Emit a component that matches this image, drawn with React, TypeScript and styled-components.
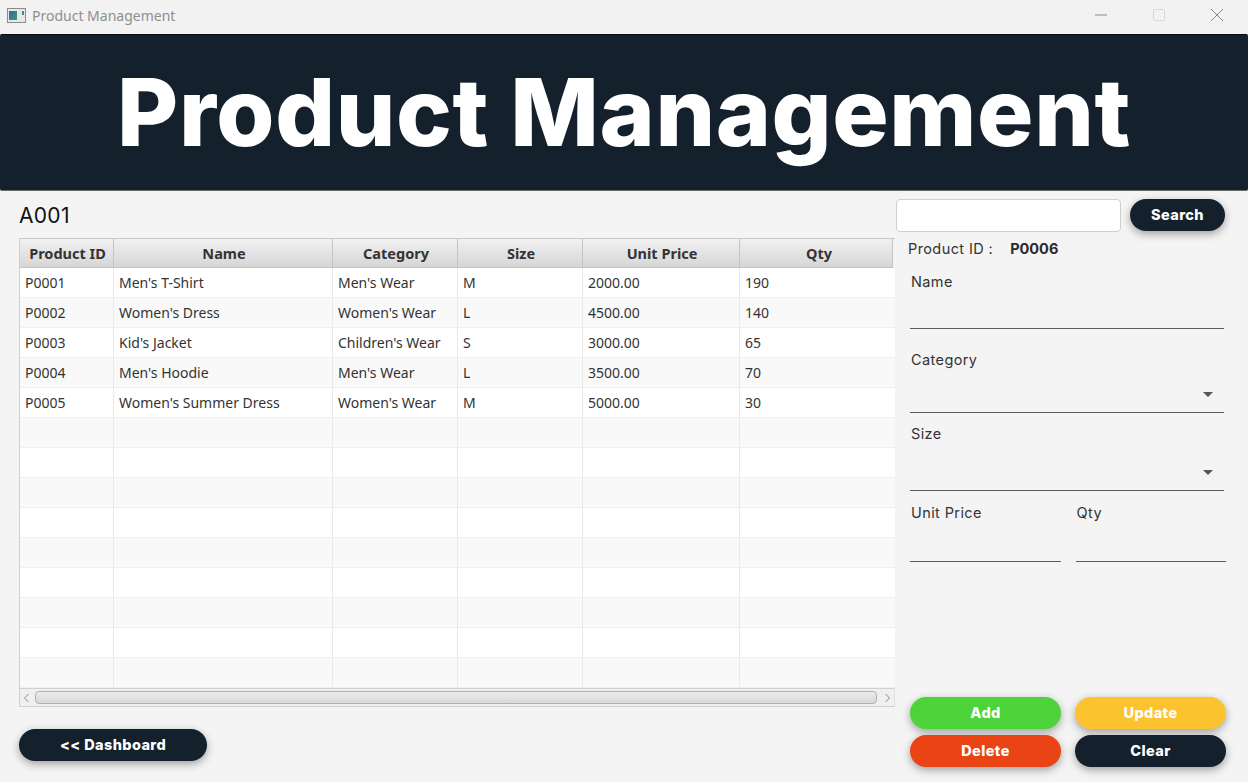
import styled, { createGlobalStyle } from "styled-components";

const NAVY = "#14212d";
const UI_FONT = `Inter, "Noto Sans", sans-serif`;
const COLUMNS = "94px 219px 125px 125px 157px 153px 2px";

const products = [
    ["P0001", "Men's T-Shirt", "Men's Wear", "M", "2000.00", "190"],
    ["P0002", "Women's Dress", "Women's Wear", "L", "4500.00", "140"],
    ["P0003", "Kid's Jacket", "Children's Wear", "S", "3000.00", "65"],
    ["P0004", "Men's Hoodie", "Men's Wear", "L", "3500.00", "70"],
    ["P0005", "Women's Summer Dress", "Women's Wear", "M", "5000.00", "30"],
];
const headers = ["Product ID", "Name", "Category", "Size", "Unit Price", "Qty"];
const EMPTY_ROWS = 9;

const GlobalStyle = createGlobalStyle`
    html, body { margin: 0; padding: 0; background: #f4f4f4; }
    * { box-sizing: border-box; }
`;

const Page = styled.div`
    width: 1248px;
    height: 782px;
    overflow: hidden;
    display: flex;
    flex-direction: column;
    background: #f4f4f4;
    font-family: ${UI_FONT};
`;

const TitleBar = styled.div`
    height: 34px;
    flex: none;
    display: flex;
    align-items: center;
    padding: 0 2px 4px 7px;
    background: #f2f2f2;
`;

const WindowTitle = styled.span`
    margin-left: 6px;
    flex: 1;
    font: 14px "Noto Sans", sans-serif;
    color: #8f8f8f;
`;

const WindowButton = styled.div`
    width: 58px;
    height: 30px;
    display: flex;
    align-items: center;
    justify-content: center;
    color: #8a8a8a;
`;

const Hero = styled.header`
    height: 157px;
    flex: none;
    display: flex;
    align-items: center;
    justify-content: center;
    padding-bottom: 2px;
    background: ${NAVY};
    border-top: 1px solid #05090d;
    border-bottom: 1px solid #666;
    border-radius: 2px;
`;

const HeroTitle = styled.h1`
    margin: 0;
    font: 800 94px/1 Inter, sans-serif;
    letter-spacing: 0.6px;
    color: #fff;
`;

const Body = styled.main`
    flex: 1;
    display: flex;
    min-height: 0;
`;

const LeftColumn = styled.section`
    width: 895px;
    flex: none;
    padding: 11px 0 0 19px;
    display: flex;
    flex-direction: column;
`;

const UserId = styled.div`
    height: 36px;
    font: 400 21px/27px Inter, sans-serif;
    letter-spacing: 0.3px;
    color: #111;
`;

const Table = styled.div`
    width: 876px;
    border-left: 1px solid #d0d0d0;
    background: #fff;
`;

const HeaderRow = styled.div`
    display: grid;
    grid-template-columns: ${COLUMNS};
    height: 30px;
    border-top: 1px solid #c8c8c8;
    background: #f4f4f4;
`;

const HeaderCell = styled.div<{ $shift?: number }>`
    display: flex;
    align-items: center;
    justify-content: center;
    padding-left: ${p => p.$shift ?? 2}px;
    background: linear-gradient(#f1f1f1, #d6d6d6);
    border-right: 1px solid #c4c4c4;
    border-bottom: 1px solid #c4c4c4;
    font: 700 14.5px "Noto Sans", sans-serif;
    color: #333;
`;

const Row = styled.div<{ $striped: boolean }>`
    display: grid;
    grid-template-columns: ${COLUMNS};
    height: 30px;
    background: ${p => (p.$striped ? "#f9f9f9" : "#fff")};
    border-bottom: 1px solid #efefef;
`;

const Cell = styled.div`
    display: flex;
    align-items: center;
    padding-left: 5px;
    border-right: 1px solid #e9e9e9;
    font: 14px "Noto Sans", sans-serif;
    color: #333;
    white-space: nowrap;

    &:last-child {
        border-right: none;
    }
`;

const ScrollBar = styled.div`
    height: 19px;
    display: flex;
    align-items: center;
    background: #f0f0f0;
    border-top: 1px solid #d0d0d0;
    border-bottom: 1px solid #d0d0d0;
    border-right: 1px solid #e0e0e0;
`;

const ScrollArrow = styled.div<{ $end?: boolean }>`
    width: ${p => (p.$end ? 17 : 15)}px;
    flex: none;
    display: flex;
    justify-content: center;
    padding: ${p => (p.$end ? "0 0 0 3px" : "0 3px 0 0")};
    color: #8a8a8a;
`;

const ScrollThumb = styled.div`
    flex: 1;
    height: 13px;
    border: 1px solid #b0b0b0;
    border-radius: 4px;
    background: linear-gradient(#ececec, #d8d8d8);
`;

const Pill = styled.button<{ $color?: string; $width?: number }>`
    width: ${p => (p.$width ? `${p.$width}px` : "100%")};
    height: 32px;
    padding: 0 0 2px;
    border: none;
    border-radius: 16px;
    background: ${p => p.$color ?? NAVY};
    box-shadow: 0 3px 9px rgba(0, 0, 0, 0.35);
    font: 800 14.5px Inter, sans-serif;
    letter-spacing: 0.4px;
    color: #fff;
`;

const DashboardSlot = styled.div`
    margin-top: 22px;
`;

const RightColumn = styled.aside`
    flex: 1;
    display: flex;
    flex-direction: column;
    padding: 8px 22px 0 0;
`;

const SearchRow = styled.div`
    display: flex;
    gap: 9px;
    align-items: flex-start;
    padding-left: 1px;
`;

const SearchInput = styled.input`
    width: 225px;
    height: 33px;
    background: #fff;
    border: 1px solid #cfcfcf;
    border-radius: 4px;
    outline: none;
`;

const IdRow = styled.div`
    display: flex;
    margin: 6px 0 0 13px;
    height: 20px;
    align-items: center;
    font: 14.5px Inter, sans-serif;
    letter-spacing: 0.4px;
    color: #333;
`;

const IdValue = styled.span`
    margin-left: 17px;
    font-weight: 700;
    letter-spacing: 0;
    color: #2b2b2b;
`;

const Form = styled.div`
    padding-left: 15px;
    display: flex;
    flex-direction: column;
    flex: 1;
`;

const Field = styled.div<{ $height: number; $inset?: number }>`
    position: relative;
    height: ${p => p.$height}px;
    margin-right: ${p => p.$inset ?? 0}px;
    border-bottom: 1.5px solid #5a5a5a;
`;

const FieldLabel = styled.label<{ $top?: number }>`
    display: block;
    margin-top: ${p => p.$top ?? 0}px;
    padding-left: 1px;
    font: 14.5px/20px Inter, sans-serif;
    letter-spacing: 0.4px;
    color: #333;
`;

const Caret = styled.span`
    position: absolute;
    right: 11px;
    bottom: 15px;
    border-left: 5px solid transparent;
    border-right: 5px solid transparent;
    border-top: 5px solid #555;
`;

const TwoCols = styled.div`
    display: flex;
    gap: 15px;
    margin-top: 12px;
`;

const HalfField = styled.div`
    flex: 1;
`;

const ActionGrid = styled.div`
    display: grid;
    grid-template-columns: 151px 151px;
    column-gap: 14px;
    row-gap: 6px;
    margin-top: 135px;
`;

const AppIcon = () => (
    <svg width="19" height="15" viewBox="0 0 19 15">
        <rect x="0.5" y="0.5" width="18" height="14" fill="#e8e8e8" stroke="#8c8c8c" />
        <defs>
            <linearGradient id="ic" x1="0" y1="0" x2="1" y2="1">
                <stop offset="0" stopColor="#2a6fa8" />
                <stop offset="1" stopColor="#3f9a70" />
            </linearGradient>
        </defs>
        <rect x="2" y="3" width="8" height="9" fill="url(#ic)" />
        <rect x="15" y="3" width="2" height="4" fill="#3f8f8a" />
    </svg>
);

const App = () => (
    <Page>
        <GlobalStyle />
        <TitleBar>
            <AppIcon />
            <WindowTitle>Product Management</WindowTitle>
            <WindowButton>
                <svg width="14" height="14" viewBox="0 0 14 14"><path d="M1 7h12" stroke="currentColor" /></svg>
            </WindowButton>
            <WindowButton>
                <svg width="14" height="14" viewBox="0 0 14 14"><rect x="1.5" y="1.5" width="11" height="11" rx="1" fill="none" stroke="#d8d8d8" /></svg>
            </WindowButton>
            <WindowButton>
                <svg width="14" height="14" viewBox="0 0 14 14"><path d="M1 1l12 12M13 1L1 13" stroke="currentColor" /></svg>
            </WindowButton>
        </TitleBar>
        <Hero>
            <HeroTitle>Product Management</HeroTitle>
        </Hero>
        <Body>
            <LeftColumn>
                <UserId>A001</UserId>
                <Table>
                    <HeaderRow>
                        {headers.map(h => <HeaderCell key={h} $shift={h === "Qty" ? 6 : 2}>{h}</HeaderCell>)}
                    </HeaderRow>
                    {products.map((row, i) => (
                        <Row key={row[0]} $striped={i % 2 === 1}>
                            {row.map((value, j) => <Cell key={j}>{value}</Cell>)}
                        </Row>
                    ))}
                    {Array.from({ length: EMPTY_ROWS }, (_, i) => (
                        <Row key={i} $striped={i % 2 === 0}>
                            {headers.map(h => <Cell key={h} />)}
                        </Row>
                    ))}
                    <ScrollBar>
                        <ScrollArrow>
                            <svg width="7" height="10" viewBox="0 0 7 10"><path d="M5.5 1L1.5 5l4 4" fill="none" stroke="currentColor" /></svg>
                        </ScrollArrow>
                        <ScrollThumb />
                        <ScrollArrow $end>
                            <svg width="7" height="10" viewBox="0 0 7 10"><path d="M1.5 1l4 4-4 4" fill="none" stroke="currentColor" /></svg>
                        </ScrollArrow>
                    </ScrollBar>
                </Table>
                <DashboardSlot>
                    <Pill $width={188}>&lt;&lt; Dashboard</Pill>
                </DashboardSlot>
            </LeftColumn>
            <RightColumn>
                <SearchRow>
                    <SearchInput />
                    <Pill $width={95}>Search</Pill>
                </SearchRow>
                <IdRow>
                    Product ID :<IdValue>P0006</IdValue>
                </IdRow>
                <Form>
                    <FieldLabel $top={14}>Name</FieldLabel>
                    <Field $height={37} $inset={2} />
                    <FieldLabel $top={21}>Category</FieldLabel>
                    <Field $height={43} $inset={2}><Caret /></Field>
                    <FieldLabel $top={11}>Size</FieldLabel>
                    <Field $height={47} $inset={2}><Caret /></Field>
                    <TwoCols>
                        <HalfField>
                            <FieldLabel>Unit Price</FieldLabel>
                            <Field $height={39} />
                        </HalfField>
                        <HalfField>
                            <FieldLabel>Qty</FieldLabel>
                            <Field $height={39} />
                        </HalfField>
                    </TwoCols>
                    <ActionGrid>
                        <Pill $color="#4cd43a">Add</Pill>
                        <Pill $color="#fdc32f">Update</Pill>
                        <Pill $color="#ea4316">Delete</Pill>
                        <Pill>Clear</Pill>
                    </ActionGrid>
                </Form>
            </RightColumn>
        </Body>
    </Page>
);

export default App;
